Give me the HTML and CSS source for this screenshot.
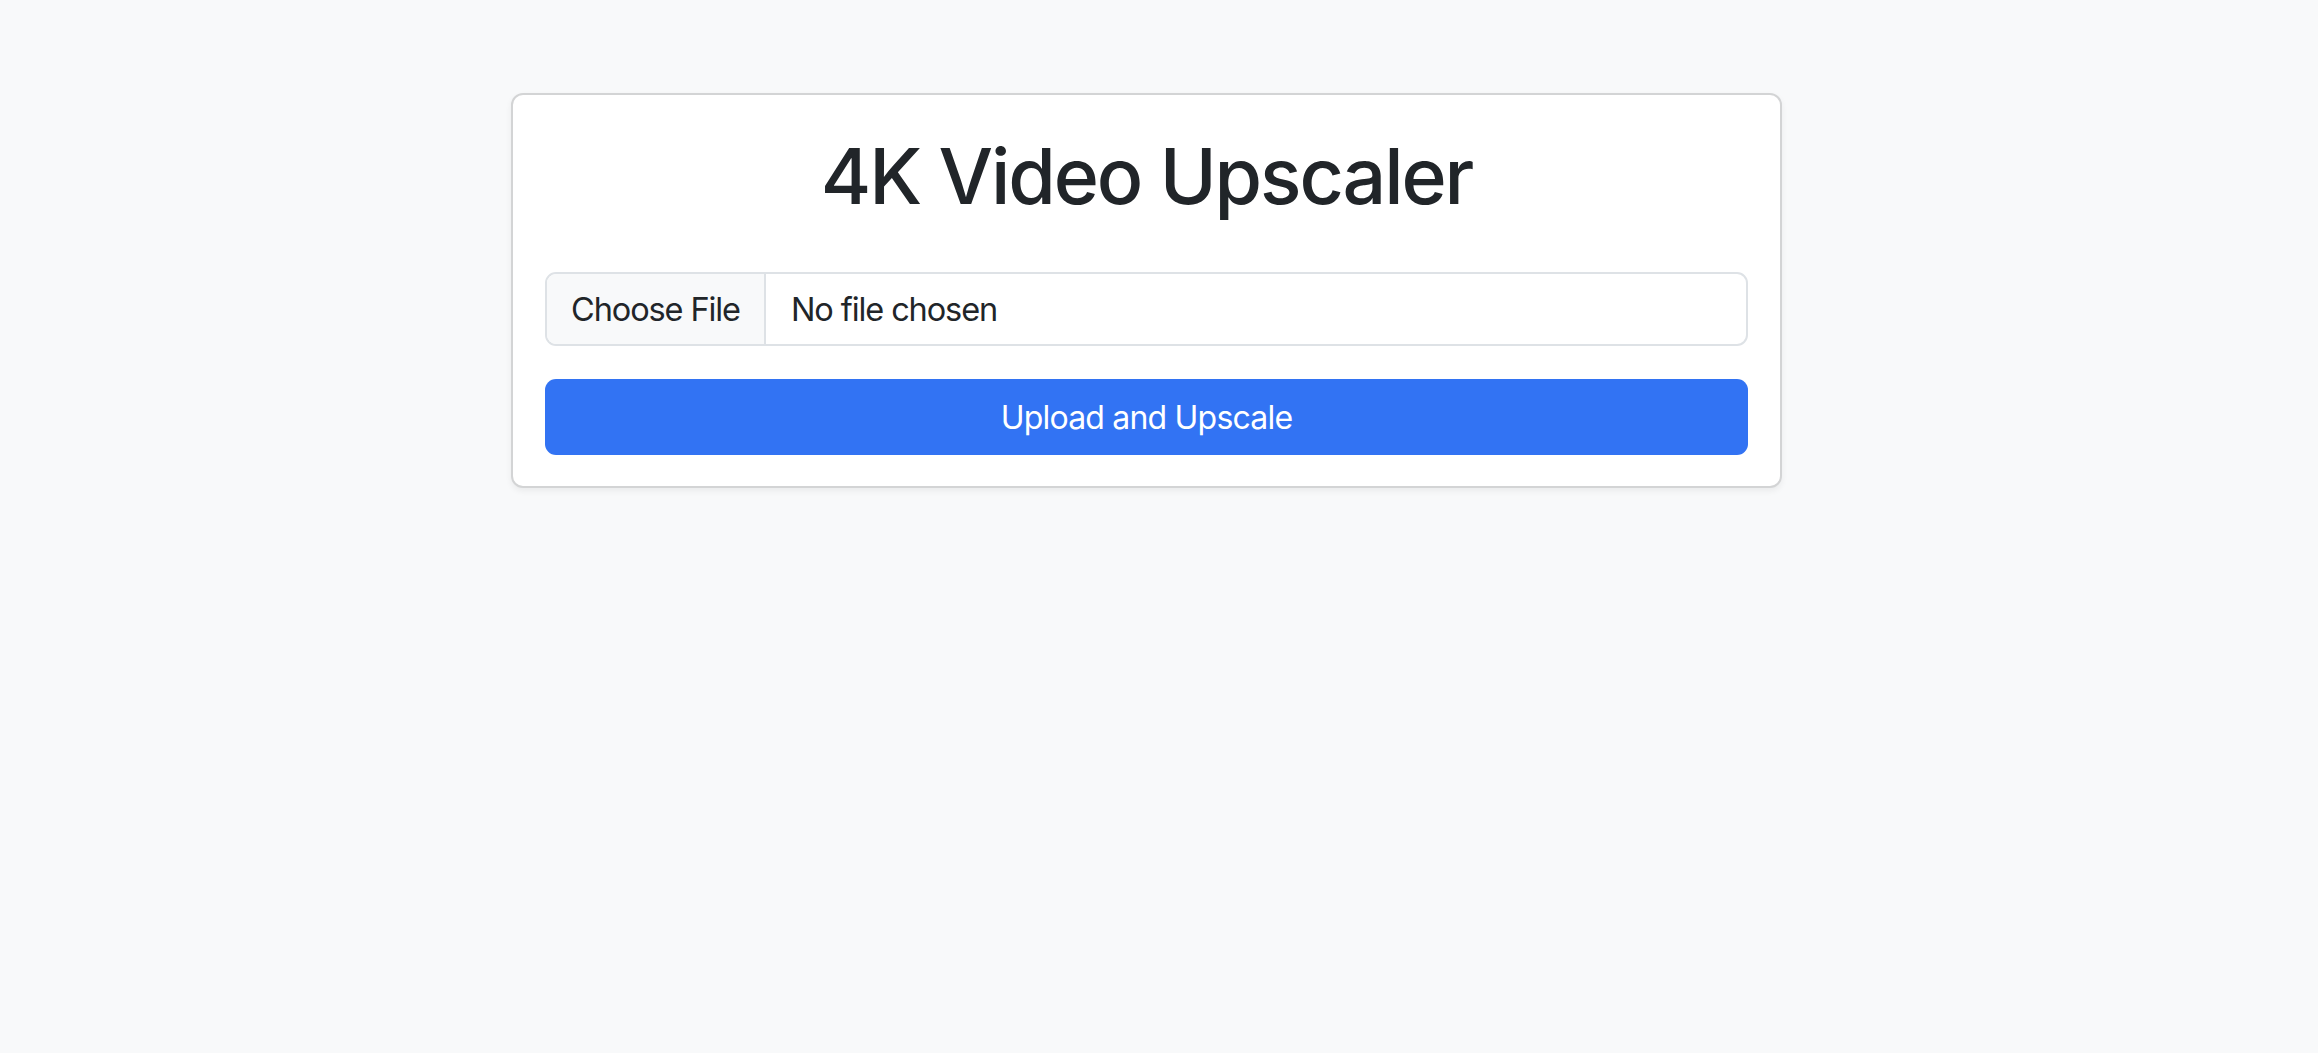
FILE: index.html
```html
<!DOCTYPE html>
<html lang="en">
<head>
<meta charset="utf-8">
<title>4K Video Upscaler</title>
<link rel="stylesheet" href="styles.css">
</head>
<body>
<main class="page">
  <section class="card">
    <h1 class="title">4K Video Upscaler</h1>
    <form class="form">
      <label class="file">
        <span class="file-btn">Choose File</span>
        <span class="file-name">No file chosen</span>
      </label>
      <button type="button" class="submit">Upload and Upscale</button>
    </form>
  </section>
</main>
</body>
</html>
```

FILE: styles.css
```css
html, body {
  margin: 0;
  padding: 0;
  background: #f8f9fa;
}
body {
  font-family: Inter, "Noto Sans", "Liberation Sans", sans-serif;
  color: #212529;
  min-height: 1053px;
}
.page {
  padding: 93px 25px 0 0;
  display: flex;
  justify-content: center;
}
.card {
  width: 1271px;
  box-sizing: border-box;
  background: #fff;
  border: 2px solid #d3d4d5;
  border-radius: 12px;
  box-shadow: 0 3px 6px rgba(0,0,0,0.06);
  padding: 35px 32px 31px;
}
.title {
  margin: 0;
  font-size: 77px;
  font-weight: 500;
  line-height: 92px;
  text-align: center;
  letter-spacing: -2.1px;
}
.form {
  margin-top: 50px;
  display: flex;
  flex-direction: column;
  gap: 33px;
}
.file {
  display: flex;
  height: 74px;
  box-sizing: border-box;
  border: 2px solid #dee2e6;
  border-radius: 11px;
  overflow: hidden;
  font-size: 32.5px;
  letter-spacing: -1.1px;
  color: #212529;
}
.file-btn {
  display: flex;
  align-items: center;
  padding: 0 24px;
  background: #f8f9fa;
  border-right: 2px solid #dee2e6;
}
.file-name {
  display: flex;
  align-items: center;
  padding-left: 25px;
}
.submit {
  height: 76px;
  border: 0;
  border-radius: 11px;
  background: #3273f3;
  color: #fff;
  font-family: inherit;
  font-size: 32px;
  letter-spacing: -0.8px;
  font-weight: 400;
  padding: 0;
}
```
